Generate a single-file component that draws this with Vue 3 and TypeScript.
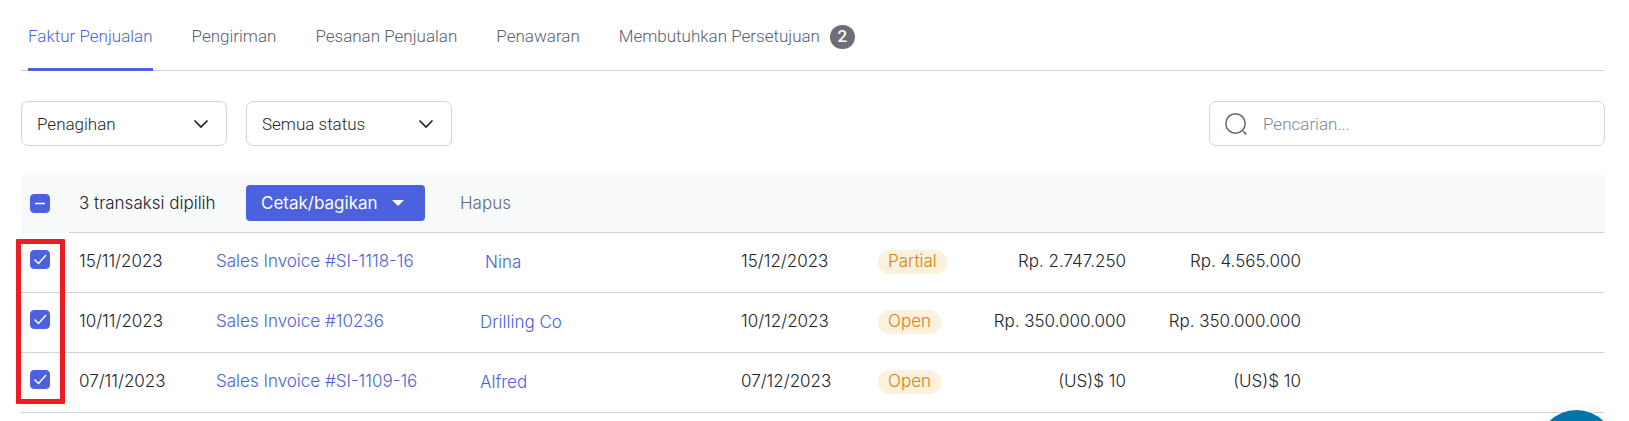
<script setup lang="ts">
import { ref, computed } from 'vue'

interface Transaction {
  date: string
  number: string
  contact: string
  due: string
  status: string
  balance: string
  total: string
  indented?: boolean
}

const tabs = [
  { label: 'Faktur Penjualan' },
  { label: 'Pengiriman' },
  { label: 'Pesanan Penjualan' },
  { label: 'Penawaran' },
  { label: 'Membutuhkan Persetujuan', count: 2 },
]
const activeTab = ref(0)

const transactions: Transaction[] = [
  { date: '15/11/2023', number: 'Sales Invoice #SI-1118-16', contact: 'Nina', due: '15/12/2023', status: 'Partial', balance: 'Rp. 2.747.250', total: 'Rp. 4.565.000', indented: true },
  { date: '10/11/2023', number: 'Sales Invoice #10236', contact: 'Drilling Co', due: '10/12/2023', status: 'Open', balance: 'Rp. 350.000.000', total: 'Rp. 350.000.000' },
  { date: '07/11/2023', number: 'Sales Invoice #SI-1109-16', contact: 'Alfred', due: '07/12/2023', status: 'Open', balance: '(US)$ 10', total: '(US)$ 10' },
]

const selected = ref<boolean[]>([true, true, true])
const selectedCount = computed(() => selected.value.filter(Boolean).length)
const kind = ref('Penagihan')
const status = ref('Semua status')
const query = ref('')

function toggleAll() {
  const next = selectedCount.value === 0
  selected.value = selected.value.map(() => next)
}
</script>

<template>
  <main class="page">
    <nav class="tabs">
      <a
        v-for="(tab, i) in tabs"
        :key="tab.label"
        href="#"
        class="tab"
        :class="{ active: i === activeTab }"
        @click.prevent="activeTab = i"
      >
        {{ tab.label }}<span v-if="tab.count" class="count">{{ tab.count }}</span>
      </a>
    </nav>

    <div class="filters">
      <div class="select">
        <select v-model="kind" aria-label="Penagihan">
          <option>Penagihan</option>
        </select>
        <svg width="16" height="10" viewBox="0 0 16 10" aria-hidden="true">
          <path d="M1.5 1.5 8 8l6.500-6.500" fill="none" stroke="#212529" stroke-width="1.700" />
        </svg>
      </div>
      <div class="select">
        <select v-model="status" aria-label="Semua status">
          <option>Semua status</option>
        </select>
        <svg width="16" height="10" viewBox="0 0 16 10" aria-hidden="true">
          <path d="M1.5 1.5 8 8l6.500-6.500" fill="none" stroke="#212529" stroke-width="1.700" />
        </svg>
      </div>
      <label class="search">
        <svg width="24" height="24" viewBox="0 0 24 24" aria-hidden="true">
          <circle cx="11.500" cy="11.500" r="9.700" fill="none" stroke="#626b79" stroke-width="1.500" />
          <path d="m19.300 19.300 3 3" stroke="#626b79" stroke-width="1.700" />
        </svg>
        <input v-model="query" type="search" placeholder="Pencarian..." aria-label="Pencarian" />
      </label>
    </div>

    <div class="table-wrap">
      <table>
        <colgroup>
          <col class="c-check" />
          <col class="c-date" />
          <col class="c-number" />
          <col class="c-contact" />
          <col class="c-date" />
          <col class="c-status" />
          <col class="c-amount" />
          <col class="c-amount" />
          <col />
        </colgroup>
        <thead>
          <tr>
            <th class="check-cell">
              <span class="check">
                <input type="checkbox" :checked="selectedCount > 0" aria-label="Pilih semua" @change="toggleAll" />
                <svg width="20" height="20" viewBox="0 0 20 20" aria-hidden="true">
                  <path d="M5 9.500h10" fill="none" stroke="#fff" stroke-width="1.500" />
                </svg>
              </span>
            </th>
            <th colspan="8" class="bulk-cell">
              <div class="bulk">
                <span class="summary">{{ selectedCount }} transaksi dipilih</span>
                <button type="button" class="print">
                  Cetak/bagikan
                  <svg width="12" height="6" viewBox="0 0 12 6" aria-hidden="true">
                    <path d="M0 0h12L6 6z" fill="#fff" />
                  </svg>
                </button>
                <button type="button" class="delete">Hapus</button>
              </div>
            </th>
          </tr>
        </thead>
        <tbody>
          <tr v-for="(t, i) in transactions" :key="t.number">
            <td class="check-cell">
              <span class="check">
                <input v-model="selected[i]" type="checkbox" :aria-label="t.number" />
                <svg width="20" height="20" viewBox="0 0 20 20" aria-hidden="true">
                  <path d="m4.500 9.500 4 4L16 5" fill="none" stroke="#fff" stroke-width="1.500" />
                </svg>
              </span>
            </td>
            <td>{{ t.date }}</td>
            <td><a href="#">{{ t.number }}</a></td>
            <td class="contact" :class="{ indented: t.indented }"><a href="#">{{ t.contact }}</a></td>
            <td>{{ t.due }}</td>
            <td><span class="pill">{{ t.status }}</span></td>
            <td class="amount">{{ t.balance }}</td>
            <td class="amount">{{ t.total }}</td>
            <td></td>
          </tr>
        </tbody>
      </table>
      <div class="highlight"></div>
    </div>

    <button type="button" class="chat" aria-label="Chat"></button>
  </main>
</template>

<style>
body {
  margin: 0;
  background: #fff;
}
</style>

<style scoped>
* {
  box-sizing: border-box;
}

.page {
  padding: 0 24px 0 21px;
  font-family: Roboto, 'Liberation Sans', sans-serif;
  font-size: 17px;
  font-weight: 300;
  line-height: 24px;
  color: #212529;
}

a {
  color: #4b61dd;
  text-decoration: none;
}

button,
input,
select {
  margin: 0;
  font: inherit;
  color: inherit;
}

.tabs {
  display: flex;
  gap: 39px;
  height: 71px;
  padding: 0 7px;
  border-bottom: 1px solid #ced4da;
}

.tab {
  display: flex;
  gap: 10px;
  height: 71px;
  padding-top: 24px;
  color: #56606e;
}

.tab.active {
  color: #4b61dd;
  border-bottom: 3px solid #4b61dd;
}

.count {
  width: 25px;
  height: 24px;
  margin-top: 1px;
  border-radius: 12px;
  background: #6e6e77;
  color: #fff;
  font-weight: 500;
  line-height: 23px;
  text-align: center;
}

.filters {
  display: flex;
  gap: 19px;
  margin-top: 30px;
}

.select {
  display: grid;
  align-items: center;
  width: 206px;
  height: 45px;
}

.select > * {
  grid-area: 1 / 1;
}

.select select {
  width: 100%;
  height: 100%;
  padding: 0 44px 0 15px;
  appearance: none;
  background: #fff;
  border: 1px solid #ced4da;
  border-radius: 7px;
}

.select svg {
  justify-self: end;
  margin-right: 18px;
  pointer-events: none;
}

.search {
  display: flex;
  align-items: center;
  gap: 15px;
  width: 396px;
  height: 45px;
  margin-left: auto;
  padding: 0 14px;
  border: 1px solid #ced4da;
  border-radius: 7px;
}

.search input {
  flex: 1;
  min-width: 0;
  padding: 0;
  appearance: none;
  background: none;
  border: 0;
  outline: 0;
}

.search input::placeholder {
  color: #7d8793;
  opacity: 1;
}

.table-wrap {
  position: relative;
  margin-top: 29px;
}

table {
  width: 100%;
  table-layout: fixed;
  border-collapse: separate;
  border-spacing: 0;
  font-family: Inter, 'Liberation Sans', sans-serif;
}

.c-check {
  width: 48px;
}

.c-date {
  width: 137px;
}

.c-number {
  width: 264px;
}

.c-contact {
  width: 261px;
}

.c-status {
  width: 83px;
}

.c-amount {
  width: 175px;
}

th {
  height: 58px;
  padding: 10px 0 0;
  background: #f8f9fb;
  font-weight: 300;
  text-align: left;
  vertical-align: top;
}

.bulk-cell {
  border-bottom: 1px solid #ced4da;
}

td {
  height: 60px;
  padding: 16px 10px 0;
  border-bottom: 1px solid #ced4da;
  vertical-align: top;
  white-space: nowrap;
}

td.contact {
  padding-top: 17px;
}

td.indented {
  padding-left: 15px;
}

td.amount {
  padding-right: 0;
  text-align: right;
}

td.check-cell {
  padding: 17px 0 0 9px;
}

th.check-cell {
  padding: 19px 0 0 9px;
}

.check {
  display: grid;
  width: 20px;
  height: 19px;
}

.check > * {
  grid-area: 1 / 1;
}

.check input {
  width: 20px;
  height: 19px;
  appearance: none;
  border: 1px solid #4b61dd;
  border-radius: 4px;
}

.check input:checked {
  background: #4b61dd;
}

.check svg {
  pointer-events: none;
}

.bulk {
  display: flex;
  align-items: center;
  padding-left: 10px;
}

.summary {
  width: 167px;
}

.print {
  display: flex;
  align-items: center;
  justify-content: space-between;
  width: 179px;
  height: 36px;
  padding: 0 21px 0 15px;
  background: #4b61dd;
  border: 0;
  border-radius: 4px;
  color: #fff;
  font-weight: 400;
}

.delete {
  margin-left: 35px;
  padding: 0;
  background: none;
  border: 0;
  color: #626b79;
}

.pill {
  display: inline-block;
  height: 24px;
  margin-top: 1px;
  padding: 0 10px;
  border-radius: 12px;
  background: #fcf1dc;
  color: #dc800f;
  line-height: 23px;
}

.highlight {
  position: absolute;
  top: 64px;
  left: -5px;
  width: 49px;
  height: 165px;
  border: 5px solid #ed1c24;
  border-radius: 1px;
  pointer-events: none;
}

.chat {
  position: fixed;
  right: 14px;
  bottom: -66px;
  width: 77px;
  height: 77px;
  padding: 0;
  border: 0;
  border-radius: 50%;
  background: #0073aa;
  box-shadow: 0 1px 24px rgba(0, 0, 0, 0.04);
}
</style>
